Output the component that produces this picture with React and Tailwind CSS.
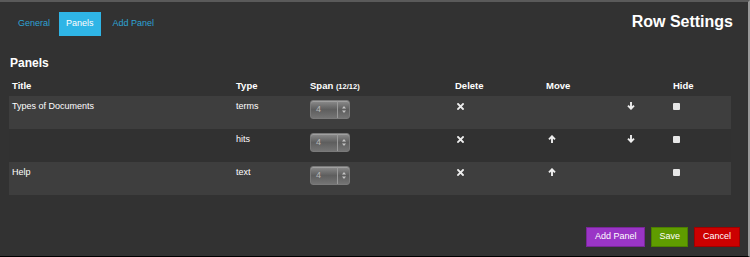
import React from 'react'

const rows = [
  { title: 'Types of Documents', type: 'terms', up: false, down: true },
  { title: '', type: 'hits', up: true, down: true },
  { title: 'Help', type: 'text', up: true, down: false },
]

function Spinner() {
  return (
    <div className="flex h-[19px] w-[40px] items-stretch rounded-[3px] border border-[#7a7a7a] bg-gradient-to-b from-[#8c8c8c] via-[#5e5e5e] to-[#747474] shadow-[inset_0_1px_0_#a0a0a0]">
      <span className="flex-1 pl-[5px] text-[9px] leading-[17px] text-[#b8b8b8]">4</span>
      <span className="flex w-[12px] items-center justify-center border-l border-[#9a9a9a]">
        <svg width="4" height="7" viewBox="0 0 4 7" fill="#c4c4c4">
          <path d="M2 0 L4 2.5 H0 Z M2 7 L4 4.5 H0 Z" />
        </svg>
      </span>
    </div>
  )
}

function Cross() {
  return (
    <svg width="7" height="7" viewBox="0 0 7 7" stroke="#eee" strokeWidth="1.8" strokeLinecap="square">
      <path d="M1 1 L6 6 M6 1 L1 6" />
    </svg>
  )
}

function Arrow({ down }) {
  return (
    <svg
      width="8"
      height="8"
      viewBox="0 0 8 8"
      fill="none"
      stroke="#eee"
      strokeWidth="1.9"
      style={down ? { transform: 'rotate(180deg)' } : undefined}
    >
      <path d="M4 8 V1.5 M1 4.4 L4 1.3 L7 4.4" />
    </svg>
  )
}

export default function App() {
  return (
    <div
      className="flex h-[257px] w-[750px] flex-col border-t-2 border-r-2 border-b border-t-[#5a5a5a] border-r-[#9a9a9a] border-b-black bg-[#323232] text-white"
      style={{ fontFamily: '"Liberation Sans", Arial, sans-serif' }}
    >
      <div className="flex items-start justify-between pl-[9px] pr-[15px] pt-[10px]">
        <div className="flex text-[9px]">
          <span className="flex h-[24px] items-center px-[9px] text-[#2ea3d4]">General</span>
          <span className="flex h-[24px] items-center bg-[#2fb5e6] px-[7px] text-white">Panels</span>
          <span className="flex h-[24px] items-center px-[12px] text-[#2ea3d4]">Add Panel</span>
        </div>
        <div className="text-[16px] font-bold leading-[20px]">Row Settings</div>
      </div>

      <div className="pl-[10px] pt-[20px] text-[12px] font-bold leading-[14px]">Panels</div>

      <div className="mt-[10px] w-[731px] pl-[9px]">
        <div className="grid grid-cols-[224px_74px_145px_91px_127px_1fr] pl-[3px] text-[9.5px] font-bold leading-[11px]">
          <span>Title</span>
          <span>Type</span>
          <span>
            Span <span className="text-[7.5px]">(12/12)</span>
          </span>
          <span>Delete</span>
          <span>Move</span>
          <span>Hide</span>
        </div>
        <div className="mt-[4px] flex flex-col">
          {rows.map((r, i) => (
            <div
              key={i}
              className={`grid h-[33px] grid-cols-[224px_74px_145px_91px_81px_46px_1fr] pl-[3px] pt-[5px] text-[9px] leading-[10px] ${
                i % 2 === 0 ? 'bg-[#3e3e3e]' : 'bg-[#313131]'
              }`}
            >
              <span>{r.title}</span>
              <span>{r.type}</span>
              <span className="-mt-[1px]">
                <Spinner />
              </span>
              <span className="pl-[2px] pt-[2px]">
                <Cross />
              </span>
              <span className="pl-[2px] pt-[1px]">{r.up && <Arrow />}</span>
              <span className="pt-[1px]">{r.down && <Arrow down />}</span>
              <span className="pt-[2px]">
                <span className="block h-[7px] w-[7px] rounded-[1px] bg-[#e6e6e6]" />
              </span>
            </div>
          ))}
        </div>
      </div>

      <div className="mt-auto flex justify-end gap-[6px] pb-[9px] pr-[8px] text-[9px]">
        <button className="h-[20px] border border-[#7a2699] bg-[#9a35c6] px-[8px]">Add Panel</button>
        <button className="h-[20px] border border-[#4b7f00] bg-[#5f9c00] px-[7px]">Save</button>
        <button className="h-[20px] border border-[#a00000] bg-[#cc0000] px-[8px]">Cancel</button>
      </div>
    </div>
  )
}
